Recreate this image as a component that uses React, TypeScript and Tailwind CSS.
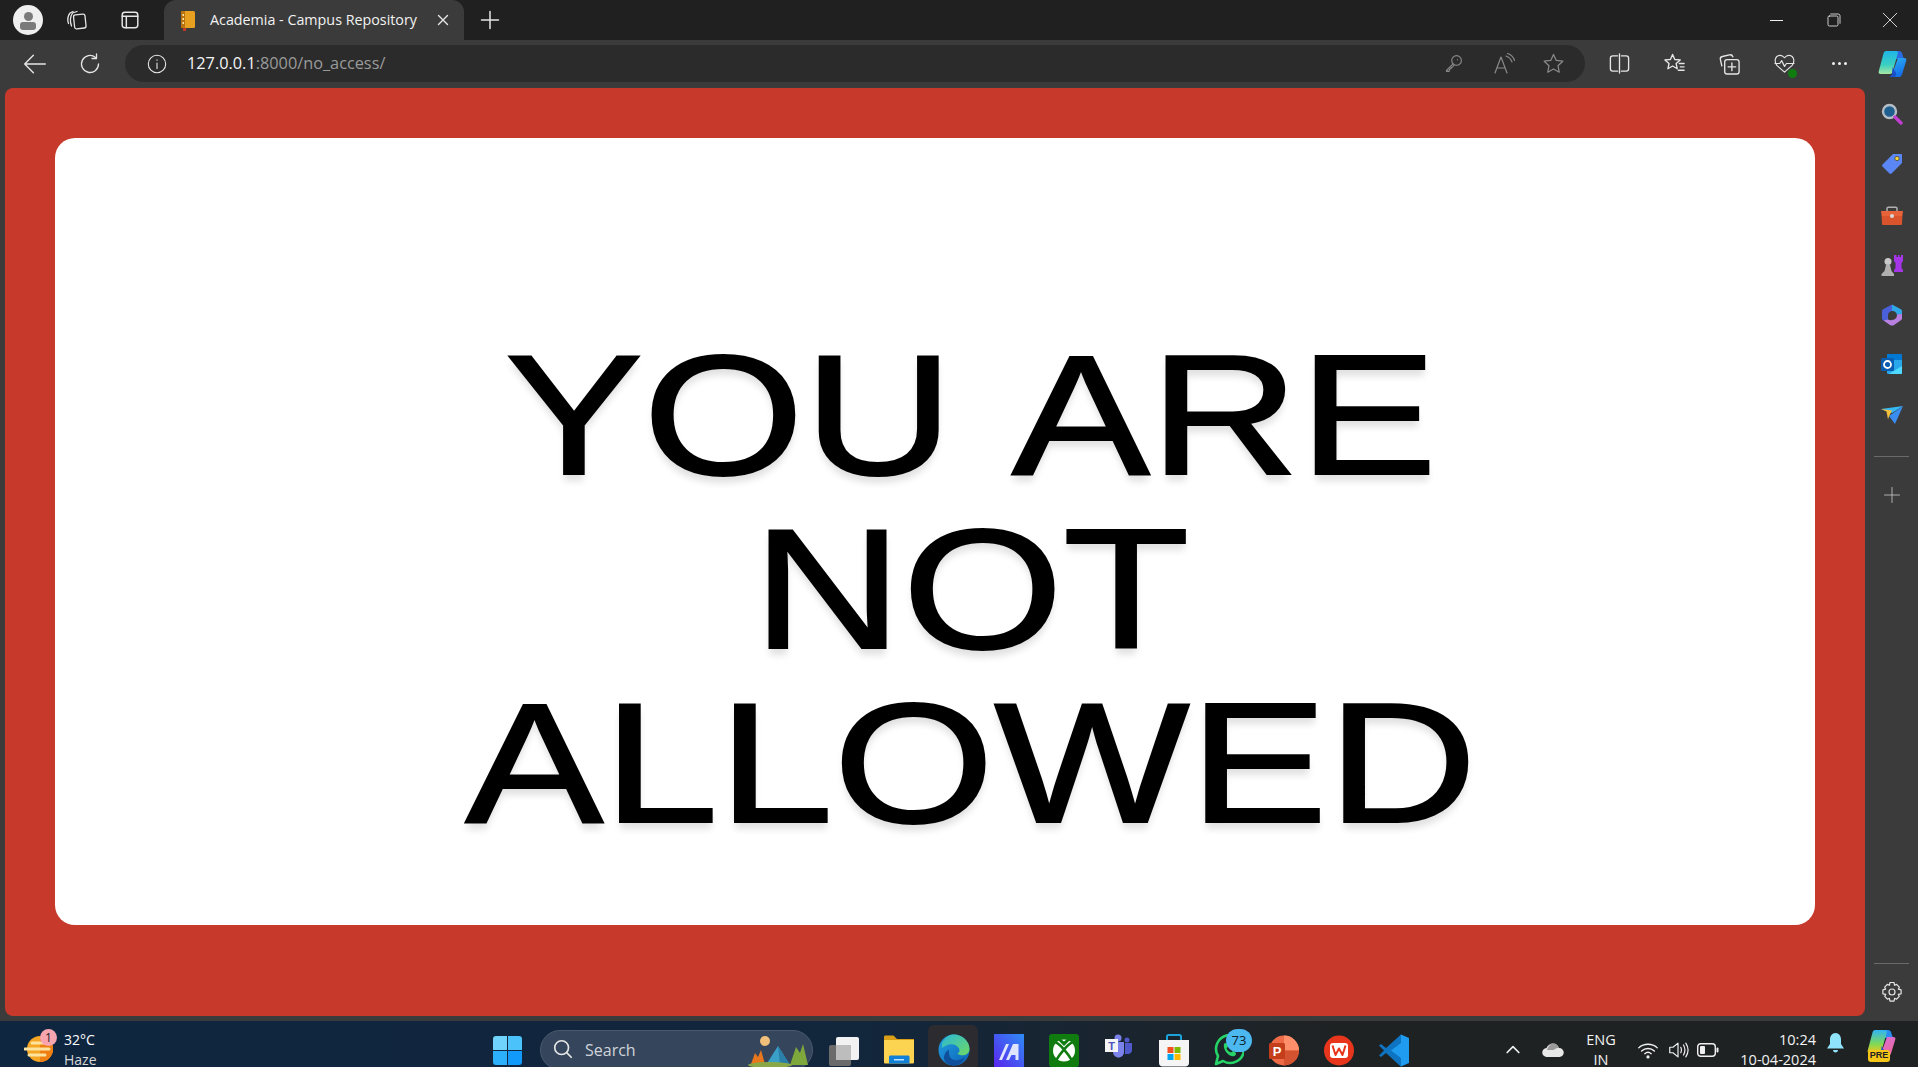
import type { ReactNode } from "react";

const fontStack = "font-['Open_Sans','Noto_Sans',sans-serif]";

function Box({ className, children }: { className: string; children: ReactNode }) {
  return <div className={`flex shrink-0 items-center justify-center ${className}`}>{children}</div>;
}

function Line({ size = 22, children, color = "#e6e6e6", width = 1.4 }: { size?: number; children: ReactNode; color?: string; width?: number }) {
  return (
    <svg width={size} height={size} viewBox="0 0 24 24" fill="none" stroke={color} strokeWidth={width} strokeLinecap="round" strokeLinejoin="round">
      {children}
    </svg>
  );
}

function Favicon() {
  return (
    <svg width="16" height="21" viewBox="0 0 16 21">
      <rect x="1" y="1" width="14" height="17" rx="1.5" fill="#e8a020" />
      <rect x="1" y="1" width="4" height="17" fill="#b8720f" />
      <rect x="2.5" y="4" width="1.5" height="2" fill="#fde6a8" />
      <rect x="2.5" y="8" width="1.5" height="2" fill="#fde6a8" />
      <rect x="2.5" y="12" width="1.5" height="2" fill="#fde6a8" />
      <rect x="3" y="18" width="3" height="3" fill="#c0392b" />
    </svg>
  );
}

function Copilot({ size = 30, id, tray = false }: { size?: number; id: string; tray?: boolean }) {
  return (
    <svg width={size} height={size} viewBox="0 0 30 30">
      <defs>
        <linearGradient id={`${id}A`} x1="0.4" y1="0" x2="0.4" y2="1">
          <stop offset="0" stopColor={tray ? "#2fb4f5" : "#1fb5e8"} />
          <stop offset="0.6" stopColor={tray ? "#7ed957" : "#3ad0c0"} />
          <stop offset="1" stopColor={tray ? "#f5c518" : "#a8e8a0"} />
        </linearGradient>
        <linearGradient id={`${id}B`} x1="0" y1="0" x2="0.5" y2="1">
          <stop offset="0" stopColor={tray ? "#d070e0" : "#2fb4f5"} />
          <stop offset="1" stopColor={tray ? "#f0689c" : "#1470e8"} />
        </linearGradient>
      </defs>
      <path d="M20 2h2c1.500 0 2.500.8 3 2l2 6H18L16 4c-.4-1 .5-2 4-2z" fill={tray ? "#2a8cf0" : "#2a6ce0"} />
      <path d="M9 2h10c1.500 0 2.200 1 1.800 2.500L15.500 23c-.4 1.200-1.200 2-2.500 2H3.500C2 25 1.300 24 1.700 22.500L6.500 4.500C6.900 3 7.800 2 9 2z" fill={`url(#${id}A)`} />
      <path d="M21 9h6.500c1.500 0 2.200 1 1.800 2.500L25 25.500c-.4 1.300-1.200 2.500-3 2.500H11c2 0 3.500-1 4-2.600z" fill={`url(#${id}B)`} />
      <path d="M15.500 18L19 24c.5 1.500 0 3.500-2.500 4H11c2 0 3.500-1 4-2.600z" fill="#1c50c8" />
    </svg>
  );
}

function SidebarIcon({ name }: { name: string }) {
  if (name === "search")
    return (
      <svg width="22" height="22" viewBox="0 0 22 22">
        <circle cx="8.5" cy="8.5" r="6.5" fill="#1f5f8f" stroke="#b4bcc4" strokeWidth="2.4" />
        <path d="M14 14l6 6" stroke="#c03ed0" strokeWidth="3.4" strokeLinecap="round" />
      </svg>
    );
  if (name === "tag")
    return (
      <svg width="22" height="22" viewBox="0 0 22 22">
        <path d="M12 1h8c.6 0 1 .4 1 1v8L10.500 20.500c-.6.6-1.400.6-2 0L1.500 13.500c-.6-.6-.6-1.400 0-2z" fill="#5b86f5" />
        <circle cx="16" cy="5.500" r="2.200" fill="#f5d33c" stroke="#333" strokeWidth=".7" />
      </svg>
    );
  if (name === "toolbox")
    return (
      <svg width="24" height="20" viewBox="0 0 24 20" className="mt-[2px]">
        <path d="M7 5V2.500c0-.8.500-1.300 1.300-1.300h7.400c.8 0 1.300.5 1.300 1.300V5" fill="none" stroke="#b0b0b0" strokeWidth="1.500" />
        <path d="M1 5h22l-.6 5H1.600z" fill="#e8623a" />
        <path d="M1.600 10h20.800l-.4 8c0 .6-.5 1-1 1H3c-.5 0-1-.4-1-1z" fill="#d9532c" />
        <circle cx="12" cy="10" r="2" fill="#d8d8d8" />
      </svg>
    );
  if (name === "chess")
    return (
      <svg width="24" height="24" viewBox="0 0 24 24">
        <path d="M15 2h1.500v2h1.500V2h1.500v2H21V2h2v6l-1.500 2v5l1.500 2v2H14v-2l1.500-2v-5L14 8V2z" fill="#a436e8" />
        <circle cx="8" cy="8.500" r="3.500" fill="#c8c8c8" />
        <path d="M6 12h4l1.500 6 2.500 3v2H1.500v-2L4.500 18z" fill="#b0b0b0" />
      </svg>
    );
  if (name === "m365")
    return (
      <svg width="22" height="24" viewBox="0 0 22 24">
        <path d="M11 1.500l8.500 4.500c1 .6 1.500 1.400 1.500 2.500v3l-5 .5c-.5-3-3-4.500-5-4z" fill="#2fa8e8" />
        <path d="M2.500 6L11 1.500 11 8c-2.500.5-4 2-4 4.500V20l-4.500-2.500C1.500 17 1 16.200 1 15V8.500C1 7.400 1.500 6.600 2.500 6z" fill="#4a60d8" />
        <path d="M7 16.500c2 1 5 1 7-.5 1.500-1 2-2.500 2-4.500l5-.5v4c0 1.200-.5 2-1.500 2.500L13 22c-1.500.8-2.700.8-4 0l-6.500-4.500 4.500-1z" fill="#b880e0" />
      </svg>
    );
  if (name === "outlook")
    return (
      <svg width="22" height="22" viewBox="0 0 22 22" className="mb-[3px]">
        <rect x="6" y="1" width="15" height="20" rx="1.500" fill="#28a8ea" />
        <rect x="6" y="1" width="15" height="6" fill="#0078d4" />
        <path d="M8 21l13-8v7c0 .6-.4 1-1 1z" fill="#50d9ff" />
        <rect x="0" y="5" width="13" height="13" rx="1.500" fill="#0a5cb0" />
        <circle cx="6.500" cy="11.500" r="3.500" fill="none" stroke="#fff" strokeWidth="1.800" />
      </svg>
    );
  if (name === "send")
    return (
      <svg width="23" height="18" viewBox="0 0 23 18" className="mb-[1px]">
        <path d="M1 3l22-3-11 7z" fill="#35b8f5" />
        <path d="M23 0L15 18l-6-8z" fill="#3a8cf0" />
        <path d="M1 3l11 1.500-3 6-1 3-1.500-8z" fill="#f5c13a" />
      </svg>
    );
  return null;
}

function TaskIcon({ name }: { name: string }) {
  switch (name) {
    case "taskview":
      return (
        <svg width="32" height="32" viewBox="0 0 32 32">
          <rect x="1" y="11" width="22" height="21" rx="2" fill="#6b6b6b" />
          <rect x="8" y="3" width="23" height="23" rx="2" fill="#f2f2f2" />
          <rect x="8" y="11" width="15" height="15" fill="#bdbdbd" />
        </svg>
      );
    case "explorer":
      return (
        <svg width="30" height="30" viewBox="0 0 30 30">
          <path d="M0 3c0-1 .6-1.500 1.500-1.500h8L13 5h17v3H0z" fill="#d9a017" />
          <path d="M0 6h30v22c0 1-.6 1.500-1.500 1.500h-27C.6 29.500 0 29 0 28z" fill="#fcd451" />
          <path d="M5 23c0-1 .6-1.500 1.500-1.500H24c.9 0 1.500.5 1.500 1.500v6.500H5z" fill="#0f7fd8" />
          <rect x="10" y="25" width="10" height="1.500" fill="#bfe3ff" />
        </svg>
      );
    case "edge":
      return (
        <svg width="32" height="32" viewBox="0 0 32 32">
          <defs>
            <linearGradient id="eg" x1="0" y1="0" x2="1" y2="1">
              <stop offset="0" stopColor="#22a0e0" />
              <stop offset="1" stopColor="#0c62b8" />
            </linearGradient>
            <linearGradient id="eg2" x1="0" y1="0" x2="1" y2="1">
              <stop offset="0" stopColor="#2bb8d8" />
              <stop offset="1" stopColor="#6fd860" />
            </linearGradient>
          </defs>
          <circle cx="16" cy="16" r="15.500" fill="url(#eg)" />
          <path d="M4 9C7 3 11 .5 16 .5 24 .5 31.500 7 31.500 15c0 3-1.500 5-4.500 6-3 .8-6.500 0-7.500-1.500 2-1 2.500-3 1.500-5C19 11 15 9.500 11 10.500 8 11.200 6 12.500 4 14z" fill="url(#eg2)" />
          <path d="M11 19c0 5 4 8 9 7 3-.5 5-1.500 7-3-2 5-6.500 8.500-11 8.500-3 0-6-1-8-3-3-3-3-9 3-13-.2 1-.2 2.500 0 3.500z" fill="#0f4f9c" />
        </svg>
      );
    case "matrix":
      return (
        <svg width="30" height="34" viewBox="0 0 30 34">
          <defs>
            <linearGradient id="mx" x1="1" y1="0" x2="0" y2="1">
              <stop offset="0" stopColor="#2f8cf5" />
              <stop offset="1" stopColor="#5a24ee" />
            </linearGradient>
          </defs>
          <rect width="30" height="34" fill="url(#mx)" />
          <path d="M5 26L12 10h3L8 26zM12 26l7-16h5.500v16h-3v-5h-4l-2.500 5z" fill="#dfe4ff" />
        </svg>
      );
    case "xbox":
      return (
        <svg width="30" height="33" viewBox="0 0 30 33">
          <rect width="30" height="33" rx="3" fill="#107c10" />
          <circle cx="15" cy="16.500" r="11" fill="#fff" />
          <path d="M6 8c4 1 12 10 18 20M24 8C20 9 12 18 6 28" fill="none" stroke="#107c10" strokeWidth="2.600" />
          <path d="M9 6c2-1 4-.8 6 1.500C17 5.200 19 5 21 6l-6 6z" fill="#107c10" />
        </svg>
      );
    case "teams":
      return (
        <svg width="28" height="24" viewBox="0 0 28 24">
          <circle cx="13" cy="4" r="3.500" fill="#7b83eb" />
          <circle cx="22" cy="6" r="2.500" fill="#5059c9" />
          <path d="M8 8h11v10c0 3-2.500 5.500-5.500 5.500S8 21 8 18z" fill="#7b83eb" />
          <path d="M20 9h7v7c0 2.500-2 4-4 4h-3z" fill="#5059c9" />
          <rect x="0" y="5" width="13" height="13" fill="#f4f4f6" />
          <text x="6.500" y="15.500" textAnchor="middle" fontSize="11" fontWeight="700" fontFamily="Liberation Sans" fill="#4b53bc">T</text>
        </svg>
      );
    case "store":
      return (
        <svg width="30" height="33" viewBox="0 0 30 33">
          <path d="M8 6V2.500C8 1.500 8.500 1 9.500 1h11c1 0 1.500.5 1.500 1.500V6" fill="none" stroke="#1aa3d8" strokeWidth="2" />
          <path d="M0 6h30v23c0 2-1.500 3.500-3.500 3.500h-23C1.500 32.500 0 31 0 29z" fill="#f5f5f5" />
          <rect x="8.500" y="13" width="6" height="6" fill="#f25022" />
          <rect x="15.500" y="13" width="6" height="6" fill="#7fba00" />
          <rect x="8.500" y="20" width="6" height="6" fill="#00a4ef" />
          <rect x="15.500" y="20" width="6" height="6" fill="#ffb900" />
        </svg>
      );
    case "whatsapp":
      return (
        <svg width="30" height="32" viewBox="0 0 30 32">
          <path d="M2 30l2-8A14 14 0 1 1 9 27z" fill="none" stroke="#25d366" strokeWidth="2.600" strokeLinejoin="round" />
          <path d="M10 10c1-1.500 2.500-1.500 3 0l1 2.500-1.500 2c1 2 2.500 3 4.500 4l2-1.500 2.500 1.500c1 1 .5 2.500-1 3.500-4 2-12-5-10.500-12z" fill="#25d366" />
        </svg>
      );
    case "ppt":
      return (
        <svg width="30" height="33" viewBox="0 0 30 33">
          <circle cx="15" cy="16.500" r="15" fill="#ed6c47" />
          <path d="M15 1.500a15 15 0 0 1 15 15H15z" fill="#ff8f6b" />
          <path d="M15 16.500h15A15 15 0 0 1 15 31.500z" fill="#d35230" />
          <rect x="0" y="9" width="16" height="16" rx="1.500" fill="#c43e1c" />
          <text x="8" y="21.500" textAnchor="middle" fontSize="13" fontWeight="700" fontFamily="Liberation Sans" fill="#fff">P</text>
        </svg>
      );
    case "wps":
      return (
        <svg width="30" height="33" viewBox="0 0 30 33">
          <circle cx="15" cy="16.500" r="15" fill="#e8361c" />
          <rect x="6" y="9" width="18" height="15" rx="3" fill="#fff" />
          <path d="M8.500 11.500l3 9.500 3.500-6.500 3.500 6.500 3-9.500" fill="none" stroke="#e8361c" strokeWidth="2" strokeLinejoin="round" />
        </svg>
      );
    case "vscode":
      return (
        <svg width="30" height="33" viewBox="0 0 30 33">
          <path d="M22 .5L30 4v25l-8 3.500L8 19z" fill="#1f9cf0" />
          <path d="M22 .5L7 14 2 10 0 11.500 5 16.500 0 21.500 2 23l5-4 15 13.500V24L12 16.500 22 9z" fill="#0e74c2" />
        </svg>
      );
    default:
      return null;
  }
}

const taskIcons = ["taskview", "explorer", "edge", "matrix", "xbox", "teams", "store", "whatsapp", "ppt", "wps", "vscode"];
const sidebarIcons = ["search", "tag", "toolbox", "chess", "m365", "outlook", "send"];

export default function App() {
  return (
    <div className={`flex h-[1067px] w-[1918px] flex-col overflow-hidden bg-[#3b3b3b] ${fontStack}`}>
      {/* tab strip */}
      <div className="flex h-10 shrink-0 items-center bg-[#202020] text-[#f2f2f2]">
        <Box className="w-14">
          <div className="flex h-[30px] w-[30px] flex-col items-center justify-end overflow-hidden rounded-full bg-[#efefef] pb-[5px]">
            <div className="h-[9px] w-[9px] rounded-full bg-[#7a7a7a]" />
            <div className="mt-[1px] h-[8px] w-[16px] rounded-[3px] bg-[#7a7a7a]" />
          </div>
        </Box>
        <Box className="w-[42px]">
          <Line size={24} width={1.3}>
            <rect x="9" y="6.5" width="11.5" height="14" rx="2" transform="rotate(-6 14 13)" />
            <path d="M6.5 18C5 14 5 9 7.500 5L12 3.500" />
            <path d="M3.500 15.500C2.300 12 2.800 8 5 5L8 3.500" />
          </Line>
        </Box>
        <Box className="w-16">
          <Line width={1.6}>
            <rect x="3.5" y="3.5" width="17" height="17" rx="3" />
            <path d="M3.5 8h17M8 8v12.5" />
          </Line>
        </Box>
        <div className="ml-[2px] flex h-10 w-[300px] shrink-0 items-center rounded-t-xl bg-[#3b3b3b] pl-[16px] pr-[12px]">
          <Favicon />
          <span className="ml-[14px] text-[14.3px] whitespace-nowrap">Academia - Campus Repository</span>
          <div className="ml-auto">
            <Line size={18} width={1.8}>
              <path d="M6 6l12 12M18 6L6 18" />
            </Line>
          </div>
        </div>
        <Box className="w-[52px]">
          <Line size={24} width={1.5}>
            <path d="M12 3.5v17M3.5 12h17" />
          </Line>
        </Box>
        <div className="ml-auto flex">
          <Box className="w-[57px]">
            <div className="h-[1px] w-[13px] bg-[#f0f0f0]" />
          </Box>
          <Box className="w-[57px]">
            <Line size={16} width={1.3}>
              <rect x="3" y="6" width="15" height="15" rx="2" />
              <path d="M7 3h11c2 0 3 1 3 3v11" />
            </Line>
          </Box>
          <Box className="w-14">
            <Line size={18} width={1.2}>
              <path d="M3 3l18 18M21 3L3 21" />
            </Line>
          </Box>
        </div>
      </div>

      {/* toolbar */}
      <div className="flex h-12 shrink-0 items-center pl-[7px] pb-[1px] text-[#f2f2f2]">
        <Box className="w-[55px]">
          <Line size={26} width={1.3}>
            <path d="M21.5 12h-19M10.5 4l-8 8 8 8" />
          </Line>
        </Box>
        <Box className="w-[55px]">
          <Line size={24} width={1.3}>
            <path d="M20.5 12a8.5 8.5 0 1 1-3-6.5" />
            <path d="M18.5 2v4.5H14" />
          </Line>
        </Box>
        <div className="ml-[8px] flex h-[37px] w-[1460px] shrink-0 items-center rounded-full bg-[#2b2b2b] pl-[21px] pr-[7px]">
          <Line size={22} width={1.2}>
            <circle cx="12" cy="12" r="9.5" />
            <path d="M12 11v6M12 7.5v.5" />
          </Line>
          <span className="ml-[19px] text-[16.3px] whitespace-nowrap text-[#f5f5f5]">
            127.0.0.1<span className="text-[#9a9a9a]">:8000/no_access/</span>
          </span>
          <div className="ml-auto flex">
            <Box className="w-[52px]">
              <Line size={21} color="#8a8a8a" width={1.3}>
                <circle cx="15.5" cy="8.5" r="5.5" />
                <path d="M11.5 12.5L4 20v1h3l.5-2.500 1.500-.5.5-1.500 1.500-.5 1.500-2" />
                <path d="M16.5 7.5v.2" />
              </Line>
            </Box>
            <Box className="w-[49px]">
              <Line size={24} color="#8a8a8a" width={1.2}>
                <path d="M3 21l6-16 6 16M5 16h8" />
                <path d="M14 4c3 1 5 3 6 6M15.5 1.500c3.500 1 6 3.500 7 7" />
              </Line>
            </Box>
            <Box className="w-[50px]">
              <Line size={23} color="#8a8a8a" width={1.3}>
                <path d="M12 2.5l2.900 6.300 6.800.8-5 4.700 1.300 6.800-6-3.400-6 3.400 1.300-6.800-5-4.700 6.800-.8z" />
              </Line>
            </Box>
          </div>
        </div>
        <div className="ml-[7px] flex">
          <Box className="w-[55px]">
            <Line size={23}>
              <path d="M10 4H5c-1.500 0-2.500 1-2.500 2.500v11C2.500 19 3.500 20 5 20h5M14 4h5c1.500 0 2.500 1 2.500 2.500v11c0 1.500-1 2.500-2.500 2.500h-5M12 2v20" />
            </Line>
          </Box>
          <Box className="w-[55px]">
            <Line size={23}>
              <path d="M10 2.5l2.300 5.300 5.700.5-4.300 3.700 1.200 5.500-4.900-2.900-4.900 2.900 1.200-5.500L2 8.300l5.700-.5z" />
              <path d="M17 12h5M18 15.5h4M16 19h6" />
            </Line>
          </Box>
          <Box className="w-[55px]">
            <Line size={23}>
              <rect x="7" y="8" width="15" height="15" rx="2.5" />
              <path d="M4 14.500L2.500 8c-.3-1.500.5-3 2-3.300L12 3c1.500-.3 3 .5 3.500 2" />
              <path d="M14.5 11.5v8M10.5 15.5h8" />
            </Line>
          </Box>
          <Box className="relative w-[55px]">
            <Line size={23} width={1.2}>
              <path d="M4 14C1 10 2 4 7 3.500c2.500-.2 4 1.200 5 2.500 1-1.300 2.500-2.700 5-2.500 5 .5 6 6.500 3 10.500l-8 7z" />
              <path d="M2 12h5l2-3 3 6 2-3h8" />
            </Line>
            <div className="absolute bottom-[1px] right-[15px] h-[9px] w-[9px] rounded-full bg-[#107c10]" />
          </Box>
          <Box className="w-[55px] gap-[3px]">
            <div className="h-[3px] w-[3px] rounded-full bg-[#f0f0f0]" />
            <div className="h-[3px] w-[3px] rounded-full bg-[#f0f0f0]" />
            <div className="h-[3px] w-[3px] rounded-full bg-[#f0f0f0]" />
          </Box>
          <Box className="w-[50px]">
            <Copilot id="cpTop" />
          </Box>
        </div>
      </div>

      {/* page + sidebar */}
      <div className="flex h-[933px] shrink-0">
        <div className="ml-[5px] flex h-[928px] w-[1860px] shrink-0 rounded-lg bg-[#c6392b] pb-[91px] pl-[50px] pr-[50px] pt-[50px]">
          <div className="flex flex-1 items-center justify-center rounded-[20px] bg-white pl-[72px] pt-[114px]">
            <h1 className="scale-x-[1.21] text-center font-['Liberation_Sans',sans-serif] text-[171px] leading-[174px] font-normal text-black [-webkit-text-stroke:2px_black] [text-shadow:0_7px_7px_rgba(0,0,0,0.12)] [word-spacing:10px]">
              <span className="block">YOU ARE</span>
              <span className="block">NOT</span>
              <span className="block">ALLOWED</span>
            </h1>
          </div>
        </div>
        <div className="flex flex-1 flex-col items-center pt-[1px]">
          {sidebarIcons.map((name) => (
            <Box key={name} className="h-[50.3px]">
              <SidebarIcon name={name} />
            </Box>
          ))}
          <div className="mt-[15px] h-[1px] w-[35px] bg-[#6a6a6a]" />
          <Box className="mt-[13px] h-[50px]">
            <Line size={18} color="#bdbdbd" width={1.2}>
              <path d="M12 2v20M2 12h20" />
            </Line>
          </Box>
          <div className="mt-auto h-[1px] w-[35px] bg-[#6a6a6a]" />
          <Box className="mb-[4px] mt-[3px] h-[50px]">
            <Line size={24} width={1.2}>
              <circle cx="12" cy="12" r="3" />
              <path d="M10 2.5h4l.6 2.800 2-.9 2.700 2.800-1 2 2.800.6v4l-2.800.6 1 2-2.700 2.800-2-.9-.6 2.800h-4l-.6-2.800-2 .9-2.700-2.800 1-2-2.800-.6v-4l2.800-.6-1-2 2.700-2.800 2 .9z" />
            </Line>
          </Box>
        </div>
      </div>

      {/* taskbar */}
      <div className="flex h-[46px] shrink-0 items-start overflow-hidden bg-gradient-to-r from-[#0f2640] via-[#12263c] via-45% to-[#1f2223] to-70% text-white">
        <div className="flex w-[493px] shrink-0 pl-[24px] pt-[9px]">
          <div className="relative">
            <svg width="30" height="30" viewBox="0 0 30 30" className="mt-[4px]">
              <circle cx="16" cy="15" r="13" fill="#f5a623" />
              <path d="M16 2a13 13 0 0 1 0 26z" fill="#ef7f12" />
              <path d="M8 9h16M1 15h24M5 21h16" stroke="#fde3a0" strokeWidth="3" strokeLinecap="round" />
            </svg>
            <div className="absolute left-[16px] top-[-1px] flex h-[17px] w-[17px] items-center justify-center rounded-full bg-[#f8a5b0] text-[12px] text-[#222]">1</div>
          </div>
          <div className="ml-[10px] flex flex-col text-[14px] leading-[20px]">
            <span>32°C</span>
            <span className="text-[#d8d8d8]">Haze</span>
          </div>
        </div>
        <div className="mt-[15px] grid h-[29px] w-[29px] shrink-0 grid-cols-2 gap-[1px]">
          <div className="rounded-tl-[3px] bg-[#6fd3fb]" />
          <div className="rounded-tr-[3px] bg-[#4cc2fa]" />
          <div className="rounded-bl-[3px] bg-[#2cb0fb]" />
          <div className="rounded-br-[3px] bg-[#119afa]" />
        </div>
        <div className="ml-[18px] mt-[9px] flex h-[40px] w-[273px] shrink-0 items-start rounded-full border border-[#4a5a6c] bg-[#35465c] pl-[11px] pt-[7px]">
          <Line size={22} width={1.8}>
            <circle cx="10.5" cy="10.5" r="7.5" />
            <path d="M16 16l5 5" />
          </Line>
          <span className="ml-[11px] text-[16px] leading-[24px] text-[#d0d4da]">Search</span>
          <svg width="62" height="34" viewBox="0 0 62 34" className="ml-auto mr-[2px] mt-[-4px]">
            <circle cx="17" cy="7" r="5" fill="#f0c07a" />
            <path d="M3 30l4-11 3 4 3-7 4 14z" fill="#e8761c" />
            <path d="M18 31L30 12l12 19z" fill="#3aa0c8" />
            <path d="M30 12l2 19h10z" fill="#2a7fa8" />
            <path d="M42 31l6-18 4 6 3-9 5 21z" fill="#7ea83c" />
            <ellipse cx="22" cy="31" rx="22" ry="3" fill="#8aa848" />
          </svg>
        </div>
        <div className="ml-[3px] flex">
          {taskIcons.map((name) => (
            <div key={name} className="relative flex h-[46px] w-[55px] shrink-0 items-start justify-center pt-[13px]">
              {name === "edge" && <div className="absolute left-[2px] top-[4px] h-[46px] w-[50px] rounded-md bg-[#2c2c30]" />}
              <div className="relative">
                <TaskIcon name={name} />
              </div>
              {name === "whatsapp" && (
                <div className="absolute right-[4px] top-[8px] flex h-[23px] w-[26px] items-center justify-center rounded-full bg-[#4cb8f0] text-[13px] text-[#10202c]">73</div>
              )}
            </div>
          ))}
        </div>
        <Box className="ml-[72px] h-[58px] w-10">
          <Line size={20} color="#f0f0f0" width={2}>
            <path d="M5 15l7-7 7 7" />
          </Line>
        </Box>
        <Box className="h-[58px] w-10">
          <svg width="22" height="14" viewBox="0 0 22 14">
            <path d="M5 14a4.500 4.500 0 0 1-.5-9C6 2 8 .5 11 .5c3 0 5 2 6 4.500a4.500 4.500 0 0 1 .5 9z" fill="#e8e8e8" />
            <path d="M5 7c1-3 3-6.500 6-6.500 3 0 5 2 6 4.500-2 0-4 .5-5 2z" fill="#9a9a9a" />
          </svg>
        </Box>
        <div className="flex w-14 shrink-0 flex-col items-center pt-[9px] text-[14.5px] leading-[20px] text-[#f2f2f2]">
          <span>ENG</span>
          <span>IN</span>
        </div>
        <Box className="ml-[4px] h-[58px] w-[30px]">
          <Line size={22} color="#f0f0f0" width={1.5}>
            <path d="M2 9.500c5.500-5 14.500-5 20 0M5 13c3.800-3.500 10.200-3.500 14 0M8.500 16c2-1.700 5-1.700 7 0" />
            <circle cx="12" cy="19.500" r="1" fill="#f0f0f0" />
          </Line>
        </Box>
        <Box className="h-[58px] w-[30px]">
          <Line size={22} color="#f0f0f0" width={1.3}>
            <path d="M3 9h3.500L12 4.500v15L6.500 15H3z" />
            <path d="M15 9c1 2 1 4 0 6M18 6.500c2 3.500 2 7.500 0 11M20.500 4.500c3 4.500 3 10.500 0 15" />
          </Line>
        </Box>
        <Box className="h-[58px] w-[30px]">
          <svg width="22" height="14" viewBox="0 0 22 14" fill="none">
            <rect x=".7" y=".7" width="17.6" height="12.6" rx="3" stroke="#f0f0f0" strokeWidth="1.4" />
            <rect x="3" y="3" width="5" height="8" rx="1" fill="#f0f0f0" />
            <rect x="19.5" y="4.500" width="2" height="5" rx="1" fill="#f0f0f0" />
          </svg>
        </Box>
        <div className="flex w-[93px] shrink-0 flex-col items-end pt-[9px] text-[14.5px] leading-[20px] text-[#f2f2f2]">
          <span>10:24</span>
          <span>10-04-2024</span>
        </div>
        <Box className="mt-[12px] h-[46px] w-[38px] items-start">
          <svg width="17" height="20" viewBox="0 0 17 20">
            <path d="M8.500 0C5 0 3 3 3 6.500V11L0 15.500h17L14 11V6.500C14 3 12 0 8.500 0z" fill="#8fe3fb" />
            <path d="M6 17h5c0 1.500-1 2.500-2.500 2.500S6 18.500 6 17z" fill="#8fe3fb" />
          </svg>
        </Box>
        <Box className="relative mt-[7px] w-[54px]">
          <Copilot size={30} id="cpTray" tray />
          <div className="absolute left-[14px] top-[22px] flex h-[12px] w-[22px] items-center justify-center rounded-[3px] bg-[#f5c518] font-['Liberation_Sans',sans-serif] text-[9px] font-bold text-[#222]">PRE</div>
        </Box>
      </div>
    </div>
  );
}
